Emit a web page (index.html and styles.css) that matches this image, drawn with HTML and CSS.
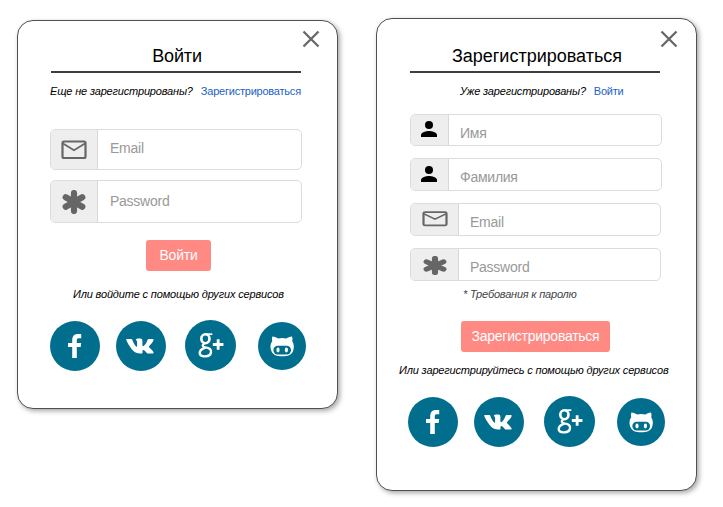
FILE: index.html
```html
<!DOCTYPE html>
<html lang="ru">
<head>
<meta charset="utf-8">
<title>Вход и регистрация</title>
<link rel="stylesheet" href="styles.css">
</head>
<body>
<svg class="sprite" aria-hidden="true">
  <symbol id="close" viewBox="0 0 18 18"><path d="M1.5 1.5 16.5 16.5M16.5 1.5 1.5 16.5" fill="none" stroke="#686868" stroke-width="2.3"/></symbol>
  <symbol id="mail" viewBox="0 0 26 20" preserveAspectRatio="none"><rect x="1.5" y="1.5" width="23" height="16.5" rx="1.5" fill="none" stroke="#666" stroke-width="2.2"/><path d="M2 3.5 13 10.2 24 3.5" fill="none" stroke="#666" stroke-width="1.8"/></symbol>
  <symbol id="star" viewBox="0 0 24 24" preserveAspectRatio="none"><path d="M12 3V21M3.7 7.3 20.3 16.7M20.3 7.3 3.7 16.7" fill="none" stroke="#666" stroke-width="6.2"/></symbol>
  <symbol id="user" viewBox="0 0 16 16"><circle cx="8" cy="4" r="4"/><path d="M0 16V14C0 11.3 5.3 10 8 10S16 11.3 16 14V16Z"/></symbol>
  <symbol id="fb" viewBox="0 0 50 50"><path fill="#fff" d="M22.2 37V26H18V22H22.2V19.5C22.2 15 24.3 13 28 13H31.2V17.2H28.8C27.2 17.2 26.8 18 26.8 19.6V22H31.2L30.7 26H26.8V37Z"/></symbol>
  <symbol id="vk" viewBox="0 0 50 50"><path fill="#fff" d="M10.5 18H15.2Q16 18 16.3 18.8C17.2 21.6 18.6 24 20.1 25.5Q21 26 21.1 24.8V20.8C21 19.5 20.2 19.2 19.7 18.9C20 17.8 21.3 17.5 23 17.5C25.8 17.5 26.4 18 26.4 19.8V24C26.6 25.5 27.4 25.3 28 24.7C29.6 23 30.8 20.7 31.5 18.9Q31.8 18 32.8 18H36.8C38 18 37.7 19 37.2 20C36 22.3 33.7 24.3 33.1 25.3C32.8 26 33.2 26.4 33.8 27C35.4 28.5 36.7 29.8 37.4 31C37.9 32 37.3 32.6 36.3 32.6H32.3C31 32.6 30.2 31.2 28.7 29.7C27.6 28.6 26.6 28.6 26.5 30V31.4C26.4 32.4 26 32.6 25 32.6C21.3 32.8 18 31.2 15.6 28C13.2 24.9 11.1 21.4 10.4 19.3Q10 18.1 10.5 18Z"/></symbol>
  <symbol id="gp" viewBox="0 0 50 50"><g fill="none" stroke="#fff"><ellipse cx="20" cy="18.4" rx="4" ry="4.4" stroke-width="2.6"/><path stroke-width="1.7" d="M20.5 13.9H26.8"/><path stroke-width="2.3" d="M19 23C16.4 24.4 17 26.2 20 26.8C24 27.5 26 28.8 25.5 31.6C24.8 36.6 15 37 14.4 32.6C14.2 29.8 16.8 28 20 27"/><path stroke-width="2.8" d="M27.3 24H37.7M32.5 18.8V29.2"/></g></symbol>
  <symbol id="git" viewBox="0 0 48 48"><path fill="#fff" d="M14.4 14.4C16.4 14.3 18.5 15.4 20 16.4Q24.2 15.7 28.4 16.4C30 15.4 32.2 14.3 34 14.4C34.7 16.5 34.6 17.8 34.2 19.2C36.3 21.7 36.2 26 35.1 29C33.5 33 29.5 34.3 24.2 34.3S15 33 13.4 29C12.2 26 12.1 21.7 14.3 19.2C13.9 17.8 13.8 16.5 14.4 14.4Z"/><rect x="15.4" y="23.8" width="17.6" height="8.7" rx="4.2" fill="#026e8d"/><ellipse cx="20" cy="28" rx="1.6" ry="2.4" fill="#fff"/><ellipse cx="28.4" cy="28" rx="1.6" ry="2.4" fill="#fff"/></symbol>
</svg>
<main class="page">
  <section class="panel login">
    <button class="close" aria-label="Закрыть"><svg><use href="#close"/></svg></button>
    <h1 class="title">Войти</h1>
    <p class="switch"><em>Еще не зарегистрированы?</em><a>Зарегистрироваться</a></p>
    <div class="fields">
      <div class="field"><span class="addon"><svg class="mail"><use href="#mail"/></svg></span><span class="hint">Email</span></div>
      <div class="field tall"><span class="addon"><svg class="star"><use href="#star"/></svg></span><span class="hint">Password</span></div>
    </div>
    <button class="submit"><span>Войти</span></button>
    <p class="or"><span>Или войдите с помощью других сервисов</span></p>
    <div class="social">
      <a class="fb"><svg><use href="#fb"/></svg></a><a class="vk"><svg><use href="#vk"/></svg></a><a class="gp"><svg><use href="#gp"/></svg></a><a class="git"><svg><use href="#git"/></svg></a>
    </div>
  </section>
  <section class="panel register">
    <button class="close" aria-label="Закрыть"><svg><use href="#close"/></svg></button>
    <h1 class="title">Зарегистрироваться</h1>
    <p class="switch"><em>Уже зарегистрированы?</em><a>Войти</a></p>
    <div class="fields">
      <div class="field narrow"><span class="addon"><svg class="user"><use href="#user"/></svg></span><span class="hint">Имя</span></div>
      <div class="field narrow"><span class="addon"><svg class="user"><use href="#user"/></svg></span><span class="hint">Фамилия</span></div>
      <div class="field"><span class="addon"><svg class="mail"><use href="#mail"/></svg></span><span class="hint">Email</span></div>
      <div class="field"><span class="addon"><svg class="star"><use href="#star"/></svg></span><span class="hint">Password</span></div>
    </div>
    <p class="rule">* Требования к паролю</p>
    <button class="submit"><span>Зарегистрироваться</span></button>
    <p class="or"><span>Или зарегистрируйтесь с помощью других сервисов</span></p>
    <div class="social">
      <a class="fb"><svg><use href="#fb"/></svg></a><a class="vk"><svg><use href="#vk"/></svg></a><a class="gp"><svg><use href="#gp"/></svg></a><a class="git"><svg><use href="#git"/></svg></a>
    </div>
  </section>
</main>
</body>
</html>
```
FILE: styles.css
```css
* { box-sizing: border-box; }
body { margin: 0; background: #fff; font-family: "Liberation Sans", Arial, sans-serif; color: #000; }
.sprite { display: none; }
svg { display: block; }
p, h1 { margin: 0; }
button { font: inherit; border: 0; padding: 0; }

.page { display: flex; align-items: flex-start; gap: 38px; padding: 18px 0 10px 17px; }
.panel {
  position: relative;
  width: 321px;
  border: 1px solid #505050;
  border-radius: 16px;
  background: #fff;
  box-shadow: 2px 2px 5px rgba(0, 0, 0, .35);
  display: flex;
  flex-direction: column;
  padding: 0 33px;
}
.login { height: 389px; margin-top: 2px; }
.register { height: 473px; }

.close { position: absolute; top: 9px; right: 17px; background: none; }
.register .close { top: 11px; right: 18px; }
.close svg { width: 18px; height: 18px; }

.title {
  width: 250px;
  height: 52px;
  padding-top: 24px;
  padding-left: 2px;
  border-bottom: 2px solid #3c3f3c;
  font-size: 18px;
  line-height: 22px;
  font-weight: 400;
  text-align: center;
}
.register .title { height: 54px; padding-top: 26px; padding-left: 4px; }
.login .title { letter-spacing: -.15px; }

.switch {
  display: flex;
  gap: 8px;
  margin-top: 10px;
  margin-left: -1px;
  height: 16px;
  font-size: 11px;
  line-height: 16px;
  letter-spacing: -.17px;
  white-space: nowrap;
}
.register .switch { margin-left: 50px; gap: 8px; }
.switch a { color: #1a5fc8; letter-spacing: -.22px; }

.fields { display: flex; flex-direction: column; gap: 10px; width: 252px; margin: 30px 0 0 -1px; }
.field { display: flex; height: 41px; border: 1px solid #dcdcdc; border-radius: 5px; overflow: hidden; }
.tall { height: 43px; }
.addon { display: flex; align-items: center; justify-content: center; width: 47px; background: #eee; border-right: 1px solid #d8d8d8; }
.hint { padding-left: 12px; font-size: 14px; line-height: 37px; letter-spacing: -.25px; color: #999; }
.tall .hint { line-height: 40px; }
.mail { width: 26px; height: 20px; }
.star { width: 24px; height: 24px; }
.user { width: 16px; height: 16px; }

.register .fields { gap: 12px; margin-top: 15px; margin-left: 0; }
.register .field { height: 33px; width: 251px; }
.register .narrow { width: 252px; }
.register .narrow .addon { width: 38px; padding-right: 1px; }
.register .narrow:first-child { height: 32px; }
.register .addon { width: 48px; align-items: flex-start; padding-top: 7px; }
.register .narrow:first-child .addon { padding-top: 6px; }
.register .hint { padding-left: 11px; line-height: 37px; }
.register .mail { height: 16px; }
.register .star { height: 19px; }
#star path { stroke-linecap: round; }

.rule { height: 14px; margin: 6px 0 0 53px; font-size: 11px; line-height: 14px; letter-spacing: -.2px; font-style: italic; color: #444; white-space: nowrap; }

.submit {
  width: 65px;
  height: 31px;
  margin: 17px 0 0 95px;
  border-radius: 3px;
  background: #ff8a83;
  color: #fff;
  font-size: 14px;
  line-height: 28px;
  letter-spacing: -.25px;
  padding-bottom: 2px;
}
.register .submit { width: 149px; margin: 20px 0 0 51px; }

.or { height: 14px; margin-top: 16px; margin-left: 22px; font-size: 11px; line-height: 14px; letter-spacing: -.16px; font-style: italic; white-space: nowrap; }
.register .or { margin-top: 11px; margin-left: -11px; }

.social { display: flex; align-items: center; width: 258px; height: 51px; margin: 19px 0 0 -1px; }
.social a { width: 50px; height: 50px; border-radius: 50%; background: #026e8d; flex: none; }
.social svg { width: 100%; height: 100%; }
.social .vk { margin-left: 16px; }
.social .gp { margin-left: 19px; width: 51px; height: 51px; }
.social .git { margin-left: 22px; width: 48px; height: 48px; }
.register .social { margin-left: -2px; margin-top: 19px; }
.register .social .gp { margin-left: 20px; }
```
